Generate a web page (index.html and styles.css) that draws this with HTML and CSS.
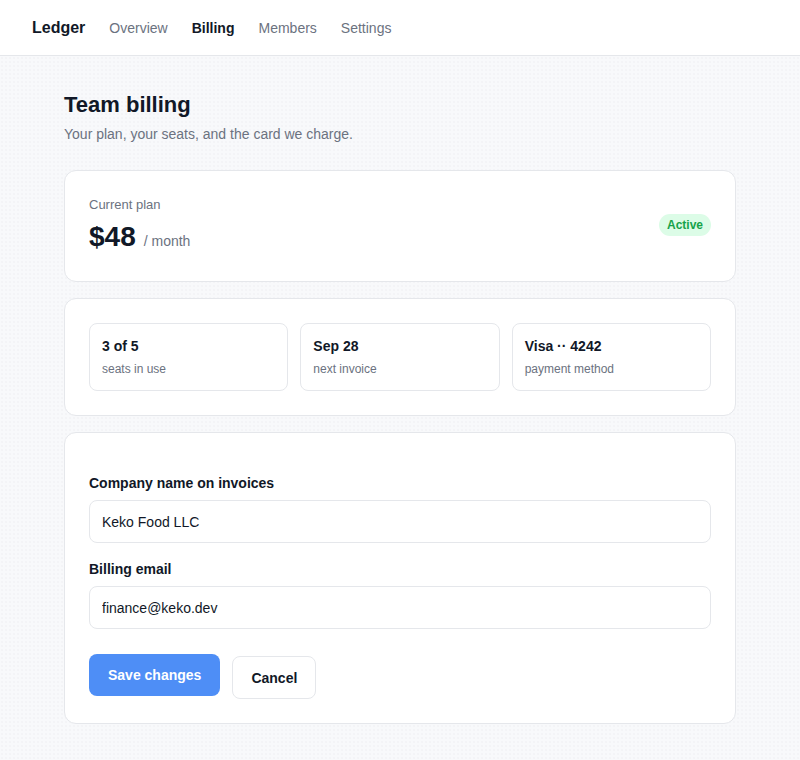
FILE: index.html
```html
<!DOCTYPE html>
<html lang="en">
<head>
<meta charset="utf-8">
<title>Ledger — Billing</title>
<link rel="stylesheet" href="styles.css">
</head>
<body>
<header class="topbar">
  <span class="brand">Ledger</span>
  <nav class="nav">
    <a class="nav-link">Overview</a>
    <a class="nav-link is-active">Billing</a>
    <a class="nav-link">Members</a>
    <a class="nav-link">Settings</a>
  </nav>
</header>
<main class="page">
  <h1 class="title">Team billing</h1>
  <p class="subtitle">Your plan, your seats, and the card we charge.</p>

  <section class="card plan">
    <div class="plan-info">
      <div class="plan-label">Current plan</div>
      <div class="plan-price"><span class="amount">$48</span><span class="per">/ month</span></div>
    </div>
    <span class="badge">Active</span>
  </section>

  <section class="card stats">
    <div class="stat"><div class="stat-value">3 of 5</div><div class="stat-label">seats in use</div></div>
    <div class="stat"><div class="stat-value">Sep 28</div><div class="stat-label">next invoice</div></div>
    <div class="stat"><div class="stat-value">Visa ·· 4242</div><div class="stat-label">payment method</div></div>
  </section>

  <section class="card form">
    <label class="field-label" for="company">Company name on invoices</label>
    <input class="field-input" id="company" type="text" value="Keko Food LLC">
    <label class="field-label" for="email">Billing email</label>
    <input class="field-input" id="email" type="text" value="finance@keko.dev">
    <div class="actions">
      <button class="btn btn-primary" type="button">Save changes</button>
      <button class="btn btn-secondary" type="button">Cancel</button>
    </div>
  </section>
</main>
</body>
</html>
```
FILE: styles.css
```css
* { box-sizing: border-box; }
html, body { margin: 0; }
body {
  font-family: "Liberation Sans", Arial, sans-serif;
  color: #111827;
  background-color: #f8f9fb;
  background-image: radial-gradient(#f0f1f4 0.6px, transparent 0.9px);
  background-size: 4px 4px;
  min-height: 760px;
}
.topbar {
  height: 56px;
  background: #fff;
  border-bottom: 1px solid #e5e7eb;
  display: flex;
  align-items: center;
  padding: 0 32px;
  gap: 24px;
}
.brand { font-size: 16px; font-weight: 700; color: #111827; }
.nav { display: flex; gap: 24px; }
.nav-link { font-size: 14px; color: #6b7280; text-decoration: none; }
.nav-link.is-active { color: #111827; font-weight: 700; }

.page { width: 672px; margin: 0 auto; padding: 35px 0 40px; }
.title { font-size: 22px; font-weight: 700; margin: 0; line-height: 28px; }
.subtitle { font-size: 14px; color: #6b7280; margin: 5px 0 26px; line-height: 20px; }

.card {
  background: #fff;
  border: 1px solid #e5e7eb;
  border-radius: 12px;
  padding: 24px;
  margin-bottom: 16px;
}
.plan { display: flex; align-items: center; justify-content: space-between; height: 112px; padding-top: 21px; }
.plan-label { font-size: 13px; color: #6b7280; line-height: 18px; }
.plan-price { display: flex; align-items: baseline; gap: 8px; margin-top: 6px; }
.amount { font-size: 28px; font-weight: 700; line-height: 34px; }
.per { font-size: 14px; color: #6b7280; }
.badge {
  background: #dcfce7;
  color: #16a34a;
  font-size: 12px;
  font-weight: 700;
  padding: 4px 8px;
  border-radius: 999px;
  line-height: 14px;
  margin-top: 1px;
}

.stats { display: grid; grid-template-columns: repeat(3, 1fr); gap: 12px; }
.stat {
  border: 1px solid #e5e7eb;
  border-radius: 8px;
  padding: 13px 12px 12px;
  height: 68px;
}
.stat-value { font-size: 14px; font-weight: 700; line-height: 18px; }
.stat-label { font-size: 12px; color: #6b7280; margin-top: 6px; line-height: 16px; }

.form { padding-top: 41px; display: flex; flex-direction: column; }
.field-label { font-size: 14px; font-weight: 700; line-height: 18px; margin-bottom: 8px; }
.field-input {
  height: 43px;
  border: 1px solid #e5e7eb;
  border-radius: 8px;
  padding: 0 12px;
  font-family: inherit;
  font-size: 14px;
  color: #111827;
  background: #fff;
  margin-bottom: 17px;
}
.actions { display: flex; gap: 12px; align-items: flex-start; margin-top: 8px; }
.btn {
  font-family: inherit;
  font-size: 14px;
  font-weight: 700;
  border-radius: 8px;
  cursor: pointer;
}
.btn-primary {
  background: #3b82f6;
  opacity: 0.9;
  color: #fff;
  border: none;
  height: 42px;
  padding: 0 19px;
}
.btn-secondary {
  background: #fff;
  color: #111827;
  border: 1px solid #e5e7eb;
  height: 43px;
  padding: 0 18px;
  margin-top: 2px;
}
```
